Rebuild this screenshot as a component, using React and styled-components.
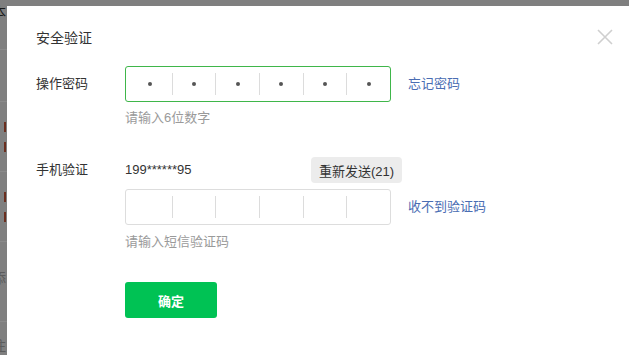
import React from 'react'
import styled, { createGlobalStyle } from 'styled-components'

const GlobalStyle = createGlobalStyle`
  html, body {
    margin: 0;
    padding: 0;
    width: 629px;
    height: 355px;
    overflow: hidden;
    background: #7f7f7f;
    font-family: "Liberation Sans", "Noto Sans CJK SC", sans-serif;
  }
`

const rows = [
  { h: 50, text: '本', dark: true, top: 4 },
  { h: 52, text: 'i', top: 14 },
  { h: 70, text: '', mark: [20, 40] },
  { h: 70, text: '', mark: [20, 40] },
  { h: 80, text: '添', top: 28 },
  { h: 40, text: '注', top: 16 },
]

const SOCIAL = ['', '', '', '', '', '']

const App = () => {
  return (
    <>
      <GlobalStyle />
      <Page>
        {rows.map((r, i) => (
          <BgRow key={i} $h={r.h}>
            {r.text && <BgText $top={r.top} $dark={r.dark}>{r.text}</BgText>}
            {r.mark && r.mark.map((m) => <BgMark key={m} style={{ top: m }} />)}
          </BgRow>
        ))}
      </Page>

      <Modal>
        <Close aria-label="关闭">
          <svg width="16" height="16" viewBox="0 0 16 16">
            <path d="M1 1 L15 15 M15 1 L1 15" stroke="#cfcfcf" strokeWidth="1.6" fill="none" />
          </svg>
        </Close>
        <Title>安全验证</Title>

        <Form>
          <Label $lh={36}>操作密码</Label>
          <Field>
            <InputLine>
              <CodeBox $active>
                {SOCIAL.map((_, i) => (
                  <Cell key={i} $first={i === 0}><Dot /></Cell>
                ))}
              </CodeBox>
              <TextLink>忘记密码</TextLink>
            </InputLine>
            <Hint>请输入6位数字</Hint>
          </Field>

          <Label $lh={26} $mt={30}>手机验证</Label>
          <Field $mt={30}>
            <PhoneLine>
              <Phone>199******95</Phone>
              <ResendButton>重新发送(21)</ResendButton>
            </PhoneLine>
            <InputLine $mt={6}>
              <CodeBox>
                {SOCIAL.map((_, i) => (
                  <Cell key={i} $first={i === 0} />
                ))}
              </CodeBox>
              <TextLink>收不到验证码</TextLink>
            </InputLine>
            <Hint $mt={8}>请输入短信验证码</Hint>
            <ConfirmButton>确定</ConfirmButton>
          </Field>
        </Form>
      </Modal>
    </>
  )
}

// page behind the mask
const Page = styled.div`
  display: flex;
  flex-direction: column;
  width: 7px;
  overflow: hidden;
`
const BgRow = styled.div`
  position: relative;
  height: ${(p) => p.$h}px;
  border-bottom: 1px solid #8a8a8a;
  box-sizing: border-box;
`
const BgText = styled.span`
  position: absolute;
  top: ${(p) => p.$top}px;
  left: -8px;
  font-size: 14px;
  line-height: 16px;
  color: ${(p) => (p.$dark ? '#1a1a1a' : '#5c5c5c')};
`
const BgMark = styled.span`
  position: absolute;
  left: 4px;
  width: 2px;
  height: 10px;
  background: #6a2e1e;
`

// dialog
const Modal = styled.div`
  position: absolute;
  left: 7px;
  top: 6px;
  right: 0;
  bottom: 0;
  background: #fff;
  padding: 22px 0 0 29px;
  box-sizing: border-box;
  color: #333;
`
const Close = styled.button`
  position: absolute;
  top: 23px;
  right: 16px;
  width: 16px;
  height: 16px;
  padding: 0;
  border: 0;
  background: none;
  display: flex;
`
const Title = styled.div`
  font-size: 14px;
  line-height: 20px;
  color: #333;
`
const Form = styled.div`
  margin-top: 18px;
  display: grid;
  grid-template-columns: 89px 1fr;
  align-items: start;
`
const Label = styled.div`
  font-size: 13px;
  line-height: ${(p) => p.$lh}px;
  margin-top: ${(p) => p.$mt || 0}px;
  color: #333;
`
const Field = styled.div`
  display: flex;
  flex-direction: column;
  align-items: flex-start;
  margin-top: ${(p) => p.$mt || 0}px;
`
const InputLine = styled.div`
  display: flex;
  align-items: center;
  gap: 17px;
  margin-top: ${(p) => p.$mt || 0}px;
`
const CodeBox = styled.div`
  width: 266px;
  height: 36px;
  box-sizing: border-box;
  border: 1px solid ${(p) => (p.$active ? '#3fb64a' : '#dddddd')};
  border-radius: 3px;
  padding: 6px 0 6px 3px;
  display: flex;
`
const Cell = styled.div`
  flex: 1;
  display: flex;
  align-items: center;
  justify-content: center;
  border-left: ${(p) => (p.$first ? 'none' : '1px solid #dcdcdc')};
`
const Dot = styled.span`
  width: 4px;
  height: 4px;
  border-radius: 50%;
  background: #555;
`
const TextLink = styled.a`
  font-size: 13px;
  line-height: 18px;
  color: #4a6db3;
  cursor: pointer;
`
const Hint = styled.div`
  margin-top: ${(p) => p.$mt || 7}px;
  font-size: 13px;
  line-height: 18px;
  color: #9a9a9a;
`
const PhoneLine = styled.div`
  display: flex;
  align-items: center;
  width: 277px;
  justify-content: space-between;
`
const Phone = styled.span`
  font-size: 13px;
  line-height: 26px;
  color: #333;
`
const ResendButton = styled.button`
  height: 26px;
  padding: 0 8px;
  border: 0;
  border-radius: 4px;
  background: #ececec;
  font-family: inherit;
  font-size: 13px;
  color: #333;
`
const ConfirmButton = styled.button`
  margin-top: 31px;
  width: 92px;
  height: 36px;
  border: 0;
  border-radius: 3px;
  background: #00c254;
  color: #fff;
  font-family: inherit;
  font-size: 13px;
  font-weight: bold;
`

export default App
